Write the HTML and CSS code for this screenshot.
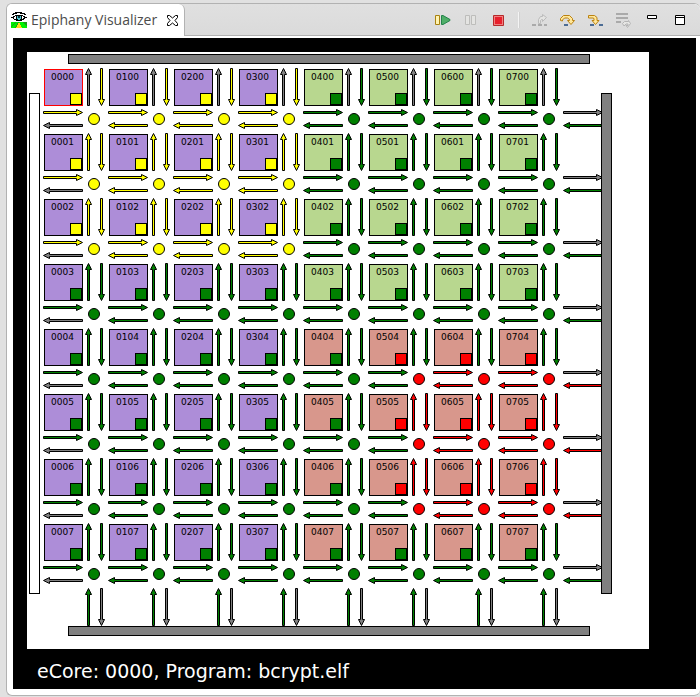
FILE: index.html
```
<!DOCTYPE html>
<html lang="en">
<head>
<meta charset="utf-8">
<title>Epiphany Visualizer</title>
<link rel="stylesheet" href="styles.css">
</head>
<body>
<main class="view">
  <header class="view-bar">
    <div class="tab">
      <svg class="icon" viewBox="0 0 16 16" shape-rendering="crispEdges" aria-hidden="true">
        <path d="M0 10h16v6H0z" fill="#16a516"/>
        <path d="M0 10h5l-5 4zM8 10h3l5 4v2h-5zM5 10h2l-3 6H0v-1z" fill="#00f200"/>
        <path d="M7 11h2v2h1v2h1v1H5v-1h1v-2h1z" fill="#ffd91a"/>
        <path d="M4 0h7v1h3v1h1v1h-2V2H9V1H6v1H3v1H1V2h1V1h2zM4 3h8v1h2v1h2v1h-2v1h-1v1h-2v1H5V8H3V7H2V6H0V5h2V4h2z" fill="#000"/>
        <path d="M3 5h2v2H3zM4 4h1v1H4zM11 4h1v1h1v1h-1v1h-1z" fill="#fff"/>
        <path d="M6 4h4v3H9v1H7V7H6z" fill="#4dc6d0"/>
        <path d="M7 4h2v2H7z" fill="#073840"/>
      </svg>
      <span class="tab-title">Epiphany Visualizer</span>
      <button class="close" type="button" aria-label="Close">
        <svg viewBox="0 0 11 11" width="11" height="11"><path d="M.5.5h2l3 2.500 3-2.500h2v2l-2.500 3 2.500 3v2h-2l-3-2.500-3 2.500h-2v-2l2.500-3-2.500-3z" fill="#fff" stroke="#000"/></svg>
      </button>
    </div>
    <div class="tools">
      <button type="button" aria-label="Resume"><svg class="icon" viewBox="0 0 16 16"><path d="M.5 3.500h4v9h-4z" fill="#fff3b0" stroke="#a98212"/><path d="M6.500 3.500v9h1.500l7-4v-1l-7-4z" fill="#4fae68" stroke="#23824a"/></svg></button>
      <button type="button" aria-label="Suspend" disabled><svg class="icon" viewBox="0 0 16 16"><path d="M2.500 3.500h4v9h-4zM8.500 3.500h4v9h-4z" fill="#e4e4e2" stroke="#bdbdbb"/></svg></button>
      <button type="button" aria-label="Terminate"><svg class="icon" viewBox="0 0 16 16"><path d="M2.500 3.500h10v10h-10z" fill="#f08080" stroke="#b52a2a"/><path d="M4 5h7v7H4z" fill="#e8202c"/></svg></button>
      <span class="divider"></span>
      <button type="button" aria-label="Step Into" disabled><svg class="icon" viewBox="0 0 16 16"><path d="M0 12h4v2H0zM6 12h4v2H6zM12 12h3v2h-3z" fill="#aaa"/><path d="M6.500 11.500v-4l2-3h2v-2l4 3-4 4v-2h-1l-1 1v3z" fill="#e4e4e2" stroke="#bbb"/></svg></button>
      <button type="button" aria-label="Step Over"><svg class="icon" viewBox="0 0 16 16"><path d="M4 12h4v2H4z" fill="#4c6c94"/><path d="M.5 8.500v-2l3-3h6l3 3v2h2l-3.500 4-3.500-4h2v-1l-2-1.500h-3l-2 2v1z" fill="#ffe79a" stroke="#ba8212"/></svg></button>
      <button type="button" aria-label="Step Return"><svg class="icon" viewBox="0 0 16 16"><path d="M2 12h4v2H2zM11 12h4v2h-4z" fill="#4c6c94"/><path d="M.5 3.500h6l2.500 2v3h2l-3.500 4-3.500-4h2v-2l-1-.5H.500z" fill="#ffe79a" stroke="#ba8212"/></svg></button>
      <button type="button" aria-label="Instruction Stepping" disabled><svg class="icon" viewBox="0 0 16 16"><path d="M0 1h12v2H0zM0 5h12v2H0zM0 9h5v2H0z" fill="#aaa"/><path d="M6.500 11.500l2-2h4v-1l2 3-3 4-1.500-2h2v-1.500h-2l-2 2z" fill="#e6e6e4" stroke="#b5b5b5"/></svg></button>
      <button type="button" aria-label="Minimize"><svg class="icon" viewBox="0 0 16 16"><path d="M3.500 3.500h9v3h-9z" fill="#fff" stroke="#000"/></svg></button>
      <button type="button" aria-label="Maximize"><svg class="icon" viewBox="0 0 16 16"><path d="M3.500 3.500h9v9h-9zM3.500 5.500h9" fill="#fff" stroke="#000"/></svg></button>
    </div>
  </header>
  <section class="stage">
    <div class="board">
      <div class="bus bus-top"></div>
      <div class="bus bus-left"></div>
      <div class="mesh" id="mesh"></div>
      <div class="bus bus-right"></div>
      <div class="bus bus-bottom"></div>
    </div>
    <p class="status">eCore: 0000, Program: bcrypt.elf</p>
  </section>
</main>
<script src="script.js"></script>
</body>
</html>
```
FILE: styles.css
```
* {
  box-sizing: border-box;
}

body {
  margin: 0;
  padding: 3px 0 1px 6px;
  background: #e1e1e1;
  font-family: "DejaVu Sans", sans-serif;
}

.view {
  border: 1px solid #b2b2b2;
  border-right: 0;
  border-radius: 6px;
  background: #fff;
  padding-bottom: 6px;
}

.view-bar {
  display: flex;
  justify-content: space-between;
  height: 34px;
  border-bottom: 2px solid #fff;
  border-radius: 6px 6px 0 0;
  background: linear-gradient(#e0e0e0, #dadada);
}

.tab {
  display: flex;
  align-items: center;
  padding: 0 6px 0 4px;
  border-right: 1px solid #b2b2b2;
  border-radius: 5px 6px 0 0;
  background: #fff;
}

.tab-title {
  margin: 0 10px 0 4px;
  color: #4c4c4c;
  font: 14px/20px "Open Sans", sans-serif;
  white-space: nowrap;
}

.icon {
  display: block;
  width: 16px;
  height: 16px;
}

button {
  padding: 0;
  border: 0;
  background: none;
}

.close svg {
  display: block;
}

.tools {
  display: flex;
  flex: 1;
  justify-content: flex-end;
  align-items: center;
  padding-right: 6px;
  border-bottom: 1px solid #b2b2b2;
}

.tools button {
  width: 28px;
  padding: 0 6px;
}

.divider {
  width: 2px;
  height: 16px;
  margin: 0 6px 0 5px;
  border-left: 1px solid #f4f4f4;
  background: #d2d2d2;
}

.stage {
  margin: 0 4px 0 6px;
  padding: 14px 14px 0;
  background: #000;
}

.board {
  display: grid;
  grid-template: 10px 5px 557px 10px / 11px 4px 557px 11px;
  width: max-content;
  padding: 2px 37px 13px 2px;
  background: #fff;
}

.bus {
  border: 1px solid #000;
  background: #808080;
}

.bus-top {
  grid-area: 1 / 3;
  margin: 0 11px 0 24px;
}

.bus-left {
  grid-area: 3 / 1;
  margin: 24px 0 32px;
  background: #fff;
}

.bus-right {
  grid-area: 3 / 4;
  margin: 24px 0 32px;
}

.bus-bottom {
  grid-area: 4 / 3;
  margin: 0 11px 0 24px;
}

.mesh {
  grid-area: 3 / 3;
  display: grid;
  grid-template: repeat(8, 65px) 37px / repeat(8, 65px) 37px;
}

.node {
  display: grid;
  grid-template: 100% / 100%;
}

.core {
  grid-area: 1 / 1;
  display: flex;
  justify-content: flex-end;
  align-items: flex-end;
  width: 39px;
  height: 37px;
  border: 1px solid #000;
  color: #000;
}

.core-id {
  align-self: flex-start;
  margin-right: -4px;
  padding-top: 2px;
  font-size: 9px;
  line-height: 11px;
}

.port {
  flex: none;
  width: 12px;
  height: 12px;
  border: 1px solid #000;
}

.group-a { background: #ad8dd8; }
.group-b { background: #b8d78f; }
.group-c { background: #d8978c; }
.selected { border-color: #f00; }

.links {
  grid-area: 1 / 1;
  width: 65px;
  height: 65px;
  overflow: visible;
  stroke: #000;
}

.idle { fill: #808080; background: #808080; }
.low { fill: #008000; background: #008000; }
.mid { fill: #ff0; background: #ff0; }
.high { fill: #f00; background: #f00; }

.status {
  margin: 0;
  padding: 4px 10px 0;
  color: #fff;
  font-size: 19px;
  line-height: 36px;
}
```
FILE: script.js
```
// Outlines of the links around one core, in the node's own 65 x 65 box.
const SHAPES = {
  up: 'M43.500 36.500V5.500H41.500L44.500-.5 47.500 5.500H45.500V36.500z',
  down: 'M56.500-.5V30.500H54.500L57.500 36.500 60.500 30.500H58.500V-.5z',
  right: 'M-.5 42.500H32.500V40.500L38.500 43.500 32.500 46.500V44.500H-.5z',
  left: 'M38.500 55.500H5.500V53.500L-.5 56.500 5.500 59.500V57.500H38.500z'
};
const SIZE = 8;

function nodeLoad(col, row) {
  if (col < 4 && row < 3) return 'mid';
  if (col > 4 && row > 3 && row < 7) return 'high';
  return 'low';
}

function linkLoads(col, row) {
  const hot = row > 3 && row < 7;
  const base = nodeLoad(col, row);
  if (col === SIZE) return { right: 'idle', left: hot ? 'high' : 'low' };
  if (row === SIZE) return { up: 'low', down: 'idle' };
  const across = col === 5 ? 'low' : base;
  const along = row === 4 ? 'low' : base;
  return {
    up: row === 0 ? 'idle' : along,
    down: along,
    right: across,
    left: col === 0 ? 'idle' : across
  };
}

function group(col, row) {
  if (col < 4) return 'group-a';
  return row < 4 ? 'group-b' : 'group-c';
}

let html = '';
for (let row = 0; row <= SIZE; row++) {
  for (let col = 0; col <= SIZE; col++) {
    const inside = col < SIZE && row < SIZE;
    html += '<div class="node">';
    if (inside) {
      const selected = col === 0 && row === 0 ? ' selected' : '';
      html += `<div class="core ${group(col, row)}${selected}">` +
        `<span class="core-id">0${col}0${row}</span>` +
        `<span class="port ${nodeLoad(col, row)}"></span></div>`;
    }
    if (inside || col !== row) {
      html += '<svg class="links" viewBox="0 0 65 65">';
      for (const [dir, load] of Object.entries(linkLoads(col, row))) {
        html += `<path class="${load}" d="${SHAPES[dir]}"/>`;
      }
      if (inside) html += `<circle class="${nodeLoad(col, row)}" cx="50" cy="50" r="5.500"/>`;
      html += '</svg>';
    }
    html += '</div>';
  }
}
document.getElementById('mesh').innerHTML = html;
```
